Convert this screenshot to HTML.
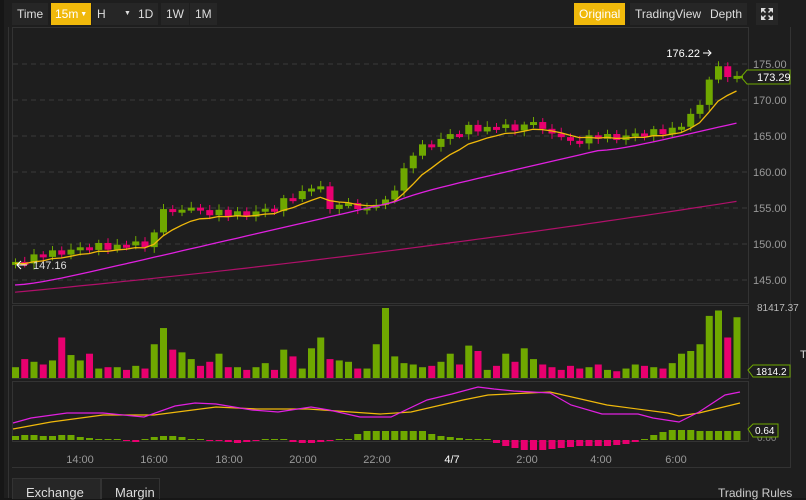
<!DOCTYPE html>
<html><head><meta charset="utf-8"><style>
body{margin:0;width:806px;height:498px;background:#161616;overflow:hidden;font-family:"Liberation Sans",sans-serif;}
#wrap{position:absolute;left:4px;top:0;width:802px;height:498px;background:#1e1e1e;}
.tb{position:absolute;top:3px;height:22px;line-height:22px;color:#ddd;font-size:12px;background:#262626;padding:0 5px;white-space:nowrap;}
.on{background:#f0b90b;color:#fff;}
svg{position:absolute;left:0;top:0}
</style></head><body>
<div id="wrap"></div>
<div class="tb" style="left:12px;">Time</div>
<div class="tb on" style="left:51px;padding:0 4px">15m<span style="font-size:7px;vertical-align:2px"> ▼</span></div>
<div class="tb" style="left:92px;width:36px">H <span style="font-size:7px;position:absolute;left:32px;top:0">▼</span></div>
<div class="tb" style="left:133px;">1D</div>
<div class="tb" style="left:161px;">1W</div>
<div class="tb" style="left:190px;">1M</div>
<div class="tb on" style="left:574px;">Original</div>
<div class="tb" style="left:630px;">TradingView</div>
<div class="tb" style="left:705px;">Depth</div>
<div class="tb" style="left:756px;width:22px;padding:0"><svg width="22" height="22" viewBox="0 0 22 22"><g fill="#ddd"><path d="M5 5h5l-2 2 2 2-1 1-2-2-2 2z"/><path d="M17 5v5l-2-2-2 2-1-1 2-2-2-2z"/><path d="M5 17v-5l2 2 2-2 1 1-2 2 2 2z"/><path d="M17 17h-5l2-2-2-2 1-1 2 2 2-2z"/></g></svg></div>
<svg id="s" width="806" height="498"></svg>
<div style="position:absolute;left:12px;top:478px;width:88px;height:20px;background:#262626;border:1px solid #333;border-bottom:none"></div>
<div style="position:absolute;left:100px;top:478px;width:58px;height:20px;border:1px solid #333;border-bottom:none"></div>
<div style="position:absolute;left:26px;top:485px;color:#ddd;font-size:13px">Exchange</div>
<div style="position:absolute;left:115px;top:485px;color:#ddd;font-size:13px">Margin</div>
<div style="position:absolute;left:718px;top:486px;color:#ccc;font-size:12px">Trading Rules</div>
<script>
var s='';
function R(x,y,w,h,c){s+='<rect x="'+x+'" y="'+y+'" width="'+w+'" height="'+h+'" fill="'+c+'"/>';}
function T(x,y,t,c,sz,a){s+='<text x="'+x+'" y="'+y+'" fill="'+(c||'#999')+'" font-size="'+(sz||11)+'" text-anchor="'+(a||'start')+'" font-family="Liberation Sans">'+t+'</text>';}
s+='<rect x="12.5" y="27.5" width="736" height="276" fill="none" stroke="#333"/>';
s+='<rect x="12.5" y="305.5" width="736" height="73" fill="none" stroke="#333"/>';
s+='<rect x="12.5" y="381.5" width="736" height="60" fill="none" stroke="#333"/>';
s+='<line x1="12" y1="467.5" x2="790" y2="467.5" stroke="#333"/><line x1="790.5" y1="27" x2="790.5" y2="468" stroke="#333"/><line x1="8.5" y1="27" x2="8.5" y2="498" stroke="#333"/>';
function py(p){return 64+(175-p)*7.2;}
for(var p=145;p<=175;p+=5){var y=py(p);s+='<line x1="13" y1="'+y+'" x2="748" y2="'+y+'" stroke="#3a3a3a" stroke-dasharray="5,4"/>';T(753,y+4,p.toFixed(2),'#999',11);}
var K=[[15,147.3],[60,149],[120,149.8],[150,150.2],[165,155],[200,154.5],[230,154],[275,154.8],[290,156.5],[318,158.2],[330,155.3],[380,155],[398,158.5],[415,163],[440,164.5],[470,166],[540,166.5],[565,164],[600,164.8],[650,165.2],[685,166.5],[700,170],[715,174.5],[725,173.5],[740,173.3]];
function f(x){for(var i=1;i<K.length;i++){if(x<=K[i][0]){var a=K[i-1],b=K[i];return a[1]+(b[1]-a[1])*(x-a[0])/(b[0]-a[0]);}}return K[K.length-1][1];}
var G='#6fa800',P='#e8006f',N=79,xs=[],cl=[],op=[];
var rnd=[.3,-.5,.8,-.2,.6,-.7,.1,.4,-.3,.9,-.6,.2,-.1,.5,-.8,.3,.7,-.4,.0,.6];
for(var i=0;i<N;i++){var x=15+i*9.25;xs.push(x);var c=f(x)+rnd[i%20]*0.7;cl.push(c);}
for(var i=0;i<N;i++){op.push(i?cl[i-1]:cl[0]-.3);}
for(var i=0;i<N;i++){var o=op[i],c=cl[i],up=c>=o,col=up?G:P;var hi=Math.max(o,c)+.4+Math.abs(rnd[(i+3)%20])*.5,lo=Math.min(o,c)-.4-Math.abs(rnd[(i+7)%20])*.5;
s+='<line x1="'+(xs[i]+.5)+'" y1="'+py(hi)+'" x2="'+(xs[i]+.5)+'" y2="'+py(lo)+'" stroke="'+col+'"/>';
var t=py(Math.max(o,c)),h=Math.max(3,py(Math.min(o,c))-t);R(xs[i]-3,t,7,h,col);}
function ema(a,n){var k=2/(n+1),r=[a[0]],e=a[0];for(var i=1;i<a.length;i++){e=a[i]*k+e*(1-k);r.push(e);}return r;}
function line(v,col,fy,w){var d='';for(var i=0;i<v.length;i++)d+=(i?'L':'M')+xs[i].toFixed(1)+' '+fy(v[i]).toFixed(1);s+='<path d="'+d+'" fill="none" stroke="'+col+'" stroke-width="'+(w||1.3)+'"/>';}
line(ema(cl,7).map(function(v){return v-0.2;}),'#f0b90b',py);
var mm=[];for(var i=0;i<N;i++){var x=xs[i];mm.push(144.3+(x-15)/725*23.2+(x>400&&x<600?0.6:0));}
line(ema(mm,5),'#e020e0',py);
var ml=[];for(var i=0;i<N;i++){var u=(xs[i]-15)/725;ml.push(143.3+u*9.5+u*u*3.2);}
line(ml,'#b0106a',py,1.2);
T(700,57,'176.22','#fff',11,'end');s+='<path d="M703 53h8M708 50l3 3-3 3" stroke="#fff" fill="none"/>';
s+='<path d="M741 77l6-7h43v14h-43z" fill="#1e1e1e" stroke="#6fa800"/>';T(757,81,'173.29','#fff',11);
R(737,76,6,2,G);
s+='<path d="M27 265h-10M21 261l-4 4 4 4" stroke="#fff" fill="none"/>';T(33,269,'147.16','#ddd',11);
var vs=[8,14,12,10,13,30,17,13,18,7,8,8,6,9,7,25,37,21,19,14,9,12,18,8,8,6,8,11,6,21,16,7,22,30,14,13,12,7,7,25,52,16,11,10,8,9,12,18,10,24,20,6,9,18,12,22,14,10,8,6,9,7,8,10,6,5,7,10,9,8,7,11,18,20,25,46,50,30,45];
for(var i=0;i<N;i++){var h=(vs[i]||10)*1.35;if(h>70)h=70;var col=cl[i]>=op[i]?G:P;R(xs[i]-3,378-h,7,h,col);}
T(757,311,'81417.37','#bbb',10);
s+='<path d="M748 370l5-5h37v12h-37z" fill="#1e1e1e" stroke="#6fa800"/>';T(756,375,'1814.2','#fff',10);
var A2=[[13,423],[31,418],[67,413],[103,413],[144,417],[175,406],[195,403],[216,404],[252,410],[278,412],[311,407],[329,410],[360,417],[391,417],[427,400],[452,394],[478,387],[494,389],[514,391],[550,393],[571,405],[602,414],[638,414],[653,418],[679,422],[699,412],[725,395],[740,392]];
var B2=[[13,429],[51,422],[103,415],[154,415],[216,407],[257,409],[308,409],[380,414],[411,412],[463,400],[488,395],[550,392],[607,405],[668,413],[679,416],[699,413],[740,403]];
function pl(pts,col){var d='';pts.forEach(function(p,i){d+=(i?'L':'M')+p[0]+' '+p[1];});s+='<path d="'+d+'" fill="none" stroke="'+col+'" stroke-width="1.2"/>';}
var H=[4,5,5,4,4,5,5,3,2,1,1,0,-1,-2,0,3,4,4,3,1,0,-1,-1,-2,-3,-2,-1,0,1,0,-2,-3,-3,-2,-1,0,1,6,9,9,9,9,9,9,9,6,4,3,2,1,1,0,-3,-6,-8,-10,-10,-10,-9,-8,-7,-6,-6,-6,-6,-5,-4,-2,1,5,8,10,10,10,9,9,9,9,9];
for(var i=0;i<N;i++){var h=H[i]||0,col=h>=0?G:P;if(h>=0)R(xs[i]-3,440-Math.max(1,h),7,Math.max(1,h),col);else R(xs[i]-3,440,7,-h,col);}
pl(B2,'#f0b90b');pl(A2,'#e020e0');
T(757,441,'0.00','#888',10);
s+='<path d="M748 429l5-5h25v13h-25z" fill="#1e1e1e" stroke="#6fa800"/>';T(755,434,'0.64','#fff',10);
var tl=[[80,'14:00'],[154,'16:00'],[229,'18:00'],[303,'20:00'],[377,'22:00'],[452,'4/7'],[527,'2:00'],[601,'4:00'],[676,'6:00']];
tl.forEach(function(t){T(t[0],463,t[1],t[1]=='4/7'?'#fff':'#999',11,'middle');});
T(800,358,'T','#ddd',11);
document.getElementById('s').innerHTML=s;
</script>
</body></html>
